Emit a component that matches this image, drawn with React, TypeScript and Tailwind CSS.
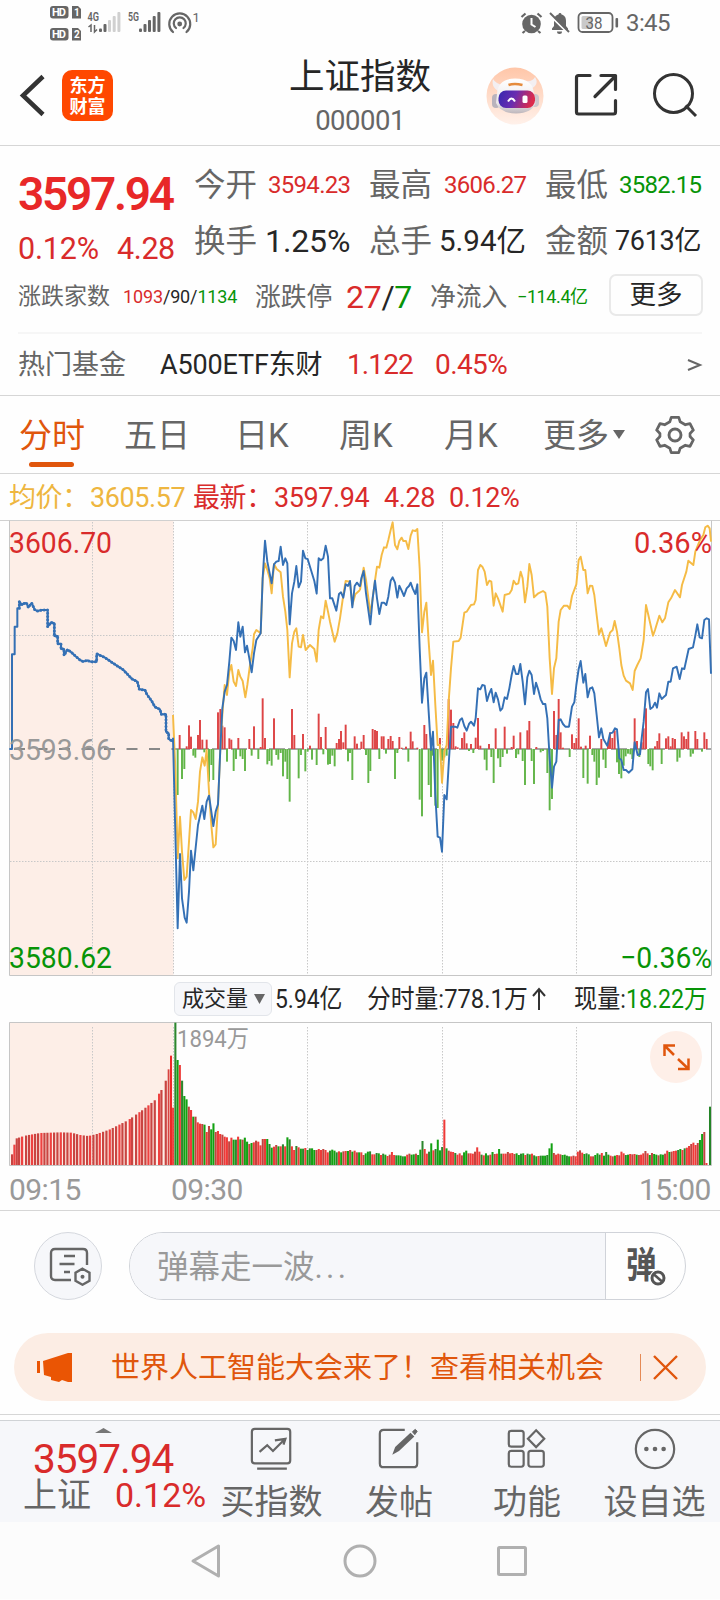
import React from "react";

const RED = "#d92b2b";
const GREEN = "#079407";

const PREOPEN =
  "28,702 36,702 36,418 44,418 44,335 52,335 52,280 58,280 58,260 66,270 74,264 80,265 85,277 95,264 104,284 112,288 125,285 143,285 143,335 153,322 163,325 163,363 173,363 173,386 183,386 183,402 192,402 192,421 202,404 212,410 225,422 240,435 250,440 262,436 272,440 290,440 290,416 315,428 340,445 368,463 380,475 396,492 412,500 418,523 435,525 440,537 455,558 465,576 480,583 484,598 498,598 498,650 506,655 506,672 519,680";
const INDEX_A =
  "519,668 533,1240 540,1017 546,1150 554,1208 560,1223 567,1130 573,1007 580,1066 594,930 600,903 607,872 613,912 620,860 627,842 634,890 640,933 647,890 654,868 661,702 667,580 674,530 681,510 688,440 694,368 701,378 708,405 715,322 721,365 728,335 735,412 741,392 748,430 755,472 762,415 769,375 782,355 788,190 795,77 802,140 808,170 815,205 822,148 829,140 836,138 842,95 849,150 856,130 862,145 869,328 876,235 883,200 889,153 896,217 903,200 909,107 916,130 923,132 930,155 943,198 950,236 956,130 963,136 970,130 977,92 984,125 990,250 997,250 1009,287 1017,237 1023,232 1030,248 1037,208 1044,213 1050,198 1057,277 1064,213 1071,203 1080,215";
const INDEX_B =
  "0,215 4,190 11,168 18,235 31,328 38,250 45,197 51,250 58,297 65,263 72,263 79,270 85,245 92,197 98,187 105,203 112,248 118,212 125,227 132,243 140,220 147,213 152,203 158,220 166,237 172,208 179,400 186,563 193,490 199,473 206,590 213,705 219,650 226,840 233,965 240,968 246,1010 253,840 260,853 266,750 273,635 285,635 292,638 300,615 306,610 313,633 320,647 327,627 333,620 342,632 347,610 354,520 361,523 367,510 374,512 381,558 388,535 394,522 401,562 407,533 414,553 421,587 427,580 434,547 441,552 448,520 455,480 461,453 468,477 475,477 481,447 488,500 495,568 502,487 508,467 515,480 522,537 528,503 535,525 542,553 549,567 556,567 562,610 569,730 576,818 582,755 589,740 596,615 602,613 609,627 616,635 627,635 636,575 643,562 649,510 656,462 662,438 670,503 676,477 683,547 690,520 697,517 703,535 710,600 717,667 724,640 730,672 742,692 750,655 758,653 765,640 771,643 778,730 784,735 791,765 798,765 806,773 817,763 824,682 833,720 840,718 845,670 851,620 858,532 864,522 871,582 878,577 885,563 891,578 898,535 905,552 918,540 925,500 932,500 939,460 950,455 959,492 966,460 973,462 986,402 999,397 1006,362 1012,328 1019,367 1026,370 1033,315 1040,310 1047,313 1053,476";
const AVG_A =
  "519,600 526,760 533,1030 540,905 546,1010 553,1095 560,1085 567,980 573,885 580,892 587,912 594,860 600,770 607,727 614,752 620,705 627,830 634,930 640,997 647,988 654,870 661,700 667,600 674,510 681,540 688,470 694,450 701,500 708,513 715,465 721,485 728,498 736,547 742,510 750,450 758,400 762,358 769,345 782,355 788,190 795,145 802,165 809,190 815,235 822,147 830,162 842,172 849,245 856,290 862,345 869,487 876,385 883,350 889,340 896,395 903,397 909,360 917,405 930,390 943,402 950,440 956,345 963,304 970,310 977,257 984,290 990,320 1004,380 1012,355 1020,310 1030,240 1037,198 1050,200 1057,270 1066,238 1080,225";
const AVG_B =
  "0,225 4,200 11,158 18,195 31,295 38,250 45,197 51,155 58,158 65,120 72,97 79,98 85,75 92,45 98,22 105,90 112,103 118,78 125,68 130,78 138,78 145,102 152,62 158,46 166,48 172,42 179,160 186,352 193,290 199,263 206,380 213,480 219,437 226,570 233,690 240,690 246,803 253,710 260,690 266,560 273,460 280,380 296,378 302,368 313,293 320,290 333,270 342,268 347,255 354,165 361,150 367,155 374,170 381,210 388,197 394,200 401,272 407,235 414,250 428,290 434,240 448,236 455,225 461,197 468,208 475,205 482,170 488,190 495,262 502,215 508,147 515,180 522,247 535,235 549,228 556,233 562,275 569,430 576,537 582,460 589,430 596,320 602,285 612,272 622,272 629,282 636,243 649,208 656,135 662,125 670,165 676,165 683,235 690,212 697,213 703,240 710,300 717,358 724,340 738,393 750,353 758,345 764,318 771,350 778,400 784,450 791,482 798,497 810,505 818,525 824,468 832,450 842,430 851,375 858,270 865,300 879,362 885,345 898,302 907,322 915,310 925,262 933,250 945,225 960,247 966,210 979,170 985,137 1000,150 1006,110 1020,75 1030,60 1036,37 1043,32 1049,40 1053,80";

const MOMENTUM_A =
  "533:-138 539:42 546:-90 553:-60 560:8 567:71 573:37 580:-20 586:-26 594:42 600:87 607:28 613:-10 620:28 627:-98 634:-48 640:-93 654:110 661:120 667:70 674:65 681:-38 688:32 694:28 701:-66 708:-30 715:33 721:-22 728:-30 735:-66 748:30 755:-20 762:68 775:-30 782:6 788:152 795:33 802:-46 808:-36 815:-50 822:92 829:-18 835:-32 842:-12 849:-82 856:-38 862:-90 869:-158 876:120 883:42 896:-88 903:-18 909:45 916:-67 923:-8 930:10 936:-32 950:-48 956:106 963:36 970:-16 977:66 984:-47 990:-45 997:-20 1004:-52 1010:18 1017:30 1023:54 1030:20 1037:73 1044:-37 1050:-12 1057:-93 1064:38 1071:16";
const MOMENTUM_B =
  "4:22 11:42 18:-18 25:-102 31:-66 38:60 45:57 51:54 58:-30 65:38 71:38 78:-14 85:30 92:39 98:24 105:-90 112:-12 118:36 125:4 138:7 145:-38 152:52 158:23 172:4 179:-152 186:-202 193:72 199:45 206:-108 213:-144 219:-20 226:-170 233:-177 240:33 246:-35 253:-25 260:-20 266:150 273:118 280:78 287:8 293:5 306:33 313:50 320:17 327:-6 333:15 340:-12 347:34 354:93 361:10 374:-32 380:-64 387:15 394:-24 401:-102 407:62 414:-28 421:-54 428:-24 434:67 441:-14 455:6 461:40 468:-27 475:-16 481:50 488:-36 495:-108 502:56 508:84 515:-36 522:-105 529:6 542:-10 549:-6 562:-72 569:-184 576:-150 582:114 589:42 596:150 602:50 609:4 629:-24 636:44 643:18 649:33 656:92 663:7 670:-87 677:10 683:-104 690:40 697:-18 703:-38 710:-108 717:-86 724:30 730:-32 737:-57 744:18 750:50 757:33 764:56 771:-40 777:-75 784:-88 791:-50 797:-22 804:-14 811:-16 817:-30 824:92 831:24 838:-24 845:20 851:62 858:122 865:-45 871:-52 878:-64 885:8 892:24 898:47 905:-45 918:32 925:38 932:8 938:33 945:30 952:-38 959:-26 965:50 972:38 979:30 985:52 992:-23 999:-14 1006:54 1012:30 1026:-8 1033:50 1040:30";

const parseMomentum = (s: string, dx: number) =>
  s.split(" ").map((p) => {
    const [x, v] = p.split(":").map(Number);
    return { x: x + dx, v };
  });
const MOMENTUM = [...parseMomentum(MOMENTUM_A, 0), ...parseMomentum(MOMENTUM_B, 1080)];

const AUCTION_SHAPE = [
  [36, 32], [43, 61], [50, 80], [65, 85], [80, 89], [120, 96], [180, 98], [215, 97], [240, 90],
  [265, 87], [290, 93], [330, 107], [385, 135], [430, 167], [465, 195], [484, 225], [498, 255],
];
const auctionHeight = (x: number) => {
  for (let i = 1; i < AUCTION_SHAPE.length; i++) {
    const [x0, h0] = AUCTION_SHAPE[i - 1];
    const [x1, h1] = AUCTION_SHAPE[i];
    if (x <= x1) return h0 + ((h1 - h0) * (x - x0)) / (x1 - x0);
  }
  return 255;
};
const AUCTION_X = [
  36, 43, 50, 57, 66, 78, 87, 96, 105, 114, 124, 133, 142, 152, 162, 172, 182, 192, 202, 212, 222,
  231, 241, 251, 261, 270, 280, 290, 299, 309, 319, 329, 338, 348, 358, 367, 377, 389, 396, 408,
  418, 426, 436, 445, 454, 464, 477, 484, 497,
];

const VOLUME_SESSIONS = [
  {
    from: 523,
    to: 1081,
    bars: "427G 315G 300R 253G 207G 197G 175R 165R 145G 145R 128R 124R 123R 121G 99R 117R 107G 125G 99R 102R 93R 91R 85R 83R 71R 82R 76G 76G 85R 77G 76R 82G 70G 63R 66G 68R 73R 70R 59R 78R 78R 78G 63G 52G 55R 60R 56G 56R 62G 56R 83G 77G 56R 45R 57G 53R 49G 49G 51R 45G 50G 50G 45G 45R 48R 45R 48R 45R 38R 43G 46G 43G 38G 41R 38G 41R 42R 42G 45R 40G 43R 38R 38G",
  },
  {
    from: 1081,
    to: 1330,
    bars: "38R 30R 35G 40G 41G 32R 32R 36G 35G 30R 34G 31G 27R 31R 39R 30R 29G 29G 28G 26G 26G 31R 34R 31G 32G 34R 30G 46G 72G 48R 34R 40G 65G 44R 48G 76G 44G 54G",
  },
  {
    from: 1330,
    to: 1652,
    bars: "136R 50G 43R 40R 39R 36G 31R 35R 29R 38G 43G 35R 35R 34R 40R 53R 40R 31G 29R 35G 29G 31R 39G 33R 34R 48G 34G 34R 34R 39R 35R 36R 33R 35G 30G 34G 35G 30R 34G 32G 34R 29G 26G 27R 28G 28G 28G 30G 50G",
  },
  {
    from: 1652,
    to: 2123,
    bars: "65G 36R 31R 34R 32R 30G 31G 28G 26G 26R 28R 26R 40R 44R 37R 33G 35G 32G 26R 26R 30G 35G 31G 36R 28G 39G 31G 28R 26R 28G 30R 29R 40R 35R 30G 31G 33R 32R 33R 31G 30R 31R 35R 42R 35R 30G 36R 33G 31G 29R 32G 31G 34R 43R 39G 40R 42R 43R 45G 48G 45R 50G 52R 57R 63R 67R 60R 66R 75G 93G 99R 6R",
  },
];
const BARS = VOLUME_SESSIONS.flatMap(({ from, to, bars }) => {
  const list = bars.split(" ");
  const step = (to - from) / list.length;
  return list.map((s, i) => ({ x: from + i * step, w: step - 0.5, h: parseInt(s, 10), red: s.endsWith("R") }));
});

function Logo() {
  return (
    <div className="flex h-[51px] w-[51px] flex-col items-center justify-center rounded-[10px] bg-[#ff4800] text-[18px] font-bold leading-[21px] text-white">
      <span>东方</span>
      <span>财富</span>
    </div>
  );
}

function StatusBar() {
  return (
    <div className="flex h-[46px] items-start text-[#666]">
      <svg className="ml-[49px] mt-[4px] shrink-0" width="152" height="38" viewBox="49 4 152 38" fontFamily="Roboto" fill="#666">
        {[6, 28].map((y, i) => (
          <g key={y}>
            <rect x="50" y={y} width="18.5" height="12.5" rx="3" />
            <path d={`M72 ${y}h6l3 3v9.500h-9z`} />
            <text x="52" y={y + 10.2} fontSize="11" fontWeight="700" fill="#fff" textLength="14">HD</text>
            <text x="74" y={y + 10} fontSize="10" fontWeight="700" fill="#fff">{i + 1}</text>
          </g>
        ))}
        <text x="87.5" y="21" fontSize="12.5" fontWeight="600" textLength="11.5" lengthAdjust="spacingAndGlyphs">4G</text>
        <text x="128" y="21" fontSize="12.5" fontWeight="600" textLength="11" lengthAdjust="spacingAndGlyphs">5G</text>
        <path d="M88.500 27l2.500-2v7M94.500 25v7l2.500-2.500" stroke="#666" strokeWidth="1.5" fill="none" />
        <rect x="99" y="28.5" width="3" height="3.5" rx="1" />
        <rect x="103.5" y="24" width="3" height="8" rx="1" />
        <g fill="#d0d0d0">
          <rect x="108" y="20" width="3" height="12" rx="1" />
          <rect x="112.7" y="16" width="3" height="16" rx="1" />
          <rect x="117.4" y="12" width="3" height="20" rx="1" />
        </g>
        <rect x="139" y="28.5" width="3" height="3.5" rx="1" />
        <rect x="143.5" y="24" width="3" height="8" rx="1" />
        <rect x="148" y="20" width="3" height="12" rx="1" />
        <rect x="152.7" y="16" width="3" height="16" rx="1" />
        <rect x="157.4" y="12" width="3" height="20" rx="1" />
        <g fill="none" stroke="#666" strokeWidth="2.2" strokeLinecap="round">
          <path d="M173 32a10.500 10.500 0 1 1 13.500 0M176 28a6 6 0 1 1 7.500 0" />
        </g>
        <circle cx="179.7" cy="24" r="2.4" />
        <text x="192.5" y="22" fontSize="13">1</text>
      </svg>
      <svg className="ml-[319px] mt-[11px] shrink-0" width="100" height="24" viewBox="520 11 100 24" fill="#666">
        <circle cx="531.5" cy="24" r="9.3" />
        <path d="M531.500 18v6.500l4 2.500" stroke="#fff" strokeWidth="2" fill="none" />
        <path d="M521.500 17l4-3.500M541.500 17l-4-3.500M525 31l-2.500 2M538 31l2.500 2" stroke="#666" strokeWidth="2.2" />
        <path d="M552 30h16v-1.500l-2-2.500v-5c0-4-2-6-4.500-6.500 0-2-3-2-3 0-2.500.5-4.500 2.500-4.500 6.500v5l-2 2.500zM557 31.500h5a2.500 2.500 0 0 1-5 0z" />
        <path d="M549 14.500l19 18.500" stroke="#fff" strokeWidth="2" />
        <path d="M550 13l19 19" stroke="#666" strokeWidth="1.9" />
        <rect x="578.5" y="13" width="34" height="19" rx="4" fill="none" stroke="#666" strokeWidth="1.8" />
        <rect x="581.5" y="16" width="11" height="13" rx="1.5" fill="#c9c9c9" />
        <rect x="615.5" y="18" width="2.6" height="9.5" rx="1" />
        <text x="585.5" y="28.5" fontFamily="Roboto" fontSize="16.5" textLength="17" lengthAdjust="spacingAndGlyphs">38</text>
      </svg>
      <span className="ml-[6px] mt-[11px] text-[24px] leading-[24px] tracking-[-0.6px]">3:45</span>
    </div>
  );
}

function Header() {
  return (
    <header className="flex h-[100px] items-start border-b border-[#d6d6d6]">
      <svg className="ml-[18px] mt-[27px] shrink-0" width="30" height="44" viewBox="0 0 30 44" fill="none" stroke="#333" strokeWidth="4.5">
        <path d="M25 3.500L5 22.500l20 19" />
      </svg>
      <div className="ml-[14px] mt-[24px]">
        <Logo />
      </div>
      <div className="ml-[147px] flex w-[200px] flex-col items-center pt-[12px]">
        <h1 className="text-[35.5px] leading-[38px] text-[#262626]">上证指数</h1>
        <span className="mt-[11px] text-[27.5px] leading-[27px] tracking-[-0.5px] text-[#666]">000001</span>
      </div>
      <svg className="ml-[25px] mt-[20px] shrink-0" width="60" height="60" viewBox="-1 -1 60 60">
        <defs>
          <linearGradient id="halo" x1="0" y1="0" x2="0" y2="1">
            <stop offset="0" stopColor="#ffc6a8" />
            <stop offset="1" stopColor="#fff1ea" />
          </linearGradient>
          <linearGradient id="visor" x1="0" y1="0" x2="1" y2=".2">
            <stop offset="0" stopColor="#3528b0" />
            <stop offset=".5" stopColor="#6a2cb0" />
            <stop offset="1" stopColor="#dc2b4c" />
          </linearGradient>
          <linearGradient id="shell" x1="0" y1="0" x2="0" y2="1">
            <stop offset="0" stopColor="#fff" />
            <stop offset=".7" stopColor="#ece8ea" />
            <stop offset="1" stopColor="#bdb6bb" />
          </linearGradient>
        </defs>
        <circle cx="29" cy="29" r="28.5" fill="url(#halo)" />
        <path d="M12 24Q5 20 7 12Q10 17 17 18zM44 22Q54 18 49 10Q47 15 39 14z" fill="#f3eff2" />
        <rect x="6" y="27" width="8" height="14" rx="4" fill="#b9b3bc" />
        <rect x="45" y="27" width="8" height="13" rx="4" fill="#cdc6cc" />
        <path d="M11 27Q12 11.500 29 11.500Q47 11.500 48 27L49.500 36Q46 46 30 46.500Q14 46 10 36z" fill="url(#shell)" />
        <rect x="12.5" y="23.5" width="36.5" height="17.5" rx="7.5" fill="url(#visor)" />
        <path d="M22 34.500q3.500-6 7 0" stroke="#fff" strokeWidth="2" fill="none" />
        <rect x="36.5" y="28.500" width="5" height="7.500" rx="1.5" fill="#fff" />
        <path d="M22.500 18q6-2 14 0" stroke="#e58b3c" strokeWidth="2.6" fill="none" />
      </svg>
      <svg className="ml-[29px] mt-[26px] shrink-0" width="46" height="48" viewBox="0 0 46 48" fill="none" stroke="#333" strokeWidth="3.2" strokeLinejoin="round" strokeLinecap="round">
        <path d="M16 3.500H4.500Q2.500 3.500 2.500 5.500v34.500q0 2 2 2h35q2 0 2-2V28.500" />
        <path d="M27 3.500h14.500v14M41 4.500L21 24.500" />
      </svg>
      <svg className="ml-[32px] mt-[25px] shrink-0" width="48" height="48" viewBox="0 0 48 48" fill="none" stroke="#333" strokeWidth="3">
        <circle cx="21.5" cy="22.5" r="19" />
        <path d="M33.500 34.500l10.500 10.500" />
      </svg>
    </header>
  );
}

function Quote() {
  return (
    <section className="h-[250px] whitespace-nowrap border-b border-[#d6d6d6] pt-[14px] text-[#666]">
      <div className="flex h-[111px]">
        <div className="w-[176px] pl-[18px] text-[#d92b2b]">
          <div className="mt-[11px] text-[46px] font-semibold leading-[46px] tracking-[-2.3px] text-[#e82828]">3597.94</div>
          <div className="mt-[17px] flex text-[30.5px] leading-[30px]">
            <span className="w-[99px] tracking-[-0.2px]">0.12%</span>
            <span className="tracking-[-0.4px]">4.28</span>
          </div>
        </div>
        <div className="flex flex-1 flex-col text-[31.5px] leading-[32px]">
          <div className="flex h-[50px] items-center">
            <span className="ml-[18px] w-[74px] pt-px">今开</span>
            <span className="w-[101px] text-[24px] tracking-[-0.7px] text-[#d92b2b]">3594.23</span>
            <span className="w-[75px] pt-px">最高</span>
            <span className="w-[101px] text-[24px] tracking-[-0.7px] text-[#d92b2b]">3606.27</span>
            <span className="w-[74px] pt-px">最低</span>
            <span className="text-[24px] tracking-[-0.7px] text-[#079407]">3582.15</span>
          </div>
          <div className="mt-[6px] flex h-[50px] items-center">
            <span className="ml-[18px] w-[71px] pt-px">换手</span>
            <span className="w-[104px] text-[32px] tracking-[-0.1px] text-[#262626]">1.25%</span>
            <span className="w-[70px] pt-px">总手</span>
            <span className="w-[106px] text-[29.5px] text-[#262626]">5.94亿</span>
            <span className="w-[70px] pt-px">金额</span>
            <span className="text-[27px] tracking-[-0.3px] text-[#262626]">7613亿</span>
          </div>
        </div>
      </div>
      <div className="flex h-[50px] items-center pl-[18px] pt-[2px] leading-[32px]">
        <span className="w-[105px] text-[23px]">涨跌家数</span>
        <span className="w-[132px] text-[18px] tracking-[-0.15px] text-[#262626]">
          <span className="text-[#d92b2b]">1093</span>/90/<span className="text-[#079407]">1134</span>
        </span>
        <span className="w-[91px] text-[25.8px]">涨跌停</span>
        <span className="w-[84px] text-[32px] tracking-[-0.3px] text-[#262626]">
          <span className="text-[#d92b2b]">27</span>/<span className="text-[#079407]">7</span>
        </span>
        <span className="w-[87px] text-[25.8px]">净流入</span>
        <span className="w-[92px] text-[18px] tracking-[-0.4px] text-[#079407]">−114.4亿</span>
        <button className="-mt-[4px] h-[42px] w-[94px] rounded-[7px] border-2 border-[#e9e9e9] text-[26.5px] leading-[38px] text-[#262626]">更多</button>
      </div>
      <div className="mx-[18px] mt-[11px] border-t-2 border-[#f6f6f6]" />
      <div className="flex h-[61px] items-center pl-[18px] pt-px text-[27px] leading-[32px]">
        <span className="w-[142px]">热门基金</span>
        <span className="w-[187px] text-[27px] tracking-[-0.15px] text-[#262626]">A500ETF东财</span>
        <span className="w-[88px] text-[28px] tracking-[-0.9px] text-[#d92b2b]">1.122</span>
        <span className="w-[251px] text-[28px] tracking-[-0.6px] text-[#d92b2b]">0.45%</span>
        <svg width="18" height="16" viewBox="0 0 18 16" fill="none" stroke="#666" strokeWidth="2">
          <path d="M2 3l12 5-12 5" />
        </svg>
      </div>
    </section>
  );
}

function Tabs() {
  return (
    <nav className="flex h-[78px] items-center whitespace-nowrap border-b border-[#d6d6d6] pl-[19px] text-[33px] leading-[80px] text-[#666]">
      <div className="relative w-[105px] pt-[3px] text-[#e0560c]">
        分时
        <div className="absolute bottom-[9px] left-[10px] h-[5px] w-[45px] rounded-full bg-[#e0560c]" />
      </div>
      <span className="w-[111px] pt-[3px]">五日</span>
      <span className="w-[104px] pt-[3px]">日K</span>
      <span className="w-[105px] pt-[3px]">周K</span>
      <span className="w-[99px] pt-[3px]">月K</span>
      <span className="w-[70px] pt-[3px]">更多</span>
      <svg width="12" height="9" viewBox="0 0 12 9"><path d="M0 0h12L6 9z" fill="#666" /></svg>
      <svg className="ml-[30px]" width="40" height="40" viewBox="-20 -20 40 40" fill="none" stroke="#666" strokeWidth="2.9" strokeLinejoin="round">
        <path d="M-4-18h8l1.500 4.500 5.500 3 5-1 3.500 6.500-3.500 3.500v3l3.500 3.500-3.500 6.500-5-1-5.500 3-1.500 4.500h-8l-1.500-4.500-5.500-3-5 1-3.500-6.500 3.500-3.500v-3l-3.500-3.500 3.500-6.500 5 1 5.500-3z" transform="scale(.94 .98)" />
        <circle r="6" />
      </svg>
    </nav>
  );
}

function Averages() {
  return (
    <div className="flex h-[46px] items-center whitespace-nowrap pl-[9px] pt-[2px] text-[27px] leading-[40px] tracking-[-0.4px] text-[#d92b2b]">
      <span className="w-[81px] text-[#eeb640]">均价：</span>
      <span className="w-[103px] text-[#eeb640]">3605.57</span>
      <span className="w-[81px]">最新：</span>
      <span className="w-[110px]">3597.94</span>
      <span className="w-[65px]">4.28</span>
      <span>0.12%</span>
    </div>
  );
}

const GRID_X = [92.5, 307.5, 442.5, 576.5];

function PriceChart() {
  return (
    <svg className="block" width="720" height="457" viewBox="0 520 720 457" fontFamily="Roboto" fontSize="30">
      <rect x="9" y="521" width="164.5" height="454" fill="#fdeee7" />
      <path d="M0 520.500H720" stroke="#d0d0d0" />
      <path d="M9.500 520.500V975.500H711.500V520.500" stroke="#c6c6c6" fill="none" />
      <g stroke="#c8c8c8" strokeDasharray="1.5 1.5">
        {[...GRID_X, 173.5].map((x) => <path key={x} d={`M${x} 522V975`} />)}
        <path d="M10 635.500H711M10 861.500H711" />
      </g>
      <path d="M14 749H174" stroke="#888" strokeWidth="1.8" strokeDasharray="11 11.5" />
      <path d="M174 749H711" stroke="#888" strokeWidth="1.6" strokeDasharray="16 3" />
      <g fill="none" strokeWidth="5.8" strokeLinejoin="round" transform="translate(0 515) scale(.33333)">
        {MOMENTUM.map((b) => (
          <rect key={b.x} x={b.x - 2.9} y={b.v > 0 ? 702 - b.v : 702} width="5.8" height={Math.abs(b.v)} fill={b.v > 0 ? "#dd4445" : "#62b548"} />
        ))}
        <g stroke="#f5bb45">
          <polyline points={AVG_A} />
          <polyline points={AVG_B} transform="translate(1080 0)" />
        </g>
        <g stroke="#3470b5">
          <polyline points={PREOPEN} strokeWidth="6" />
          <polyline points={PREOPEN.slice(PREOPEN.indexOf("58,280"))} strokeWidth="9" strokeLinecap="round" strokeDasharray="0 10" />
          <polyline points={INDEX_A} />
          <polyline points={INDEX_B} transform="translate(1080 0)" />
        </g>
      </g>
      <text x="9" y="552.5" fill={RED} textLength="103" lengthAdjust="spacingAndGlyphs">3606.70</text>
      <text x="9" y="759.5" fill="#999" textLength="103" lengthAdjust="spacingAndGlyphs">3593.66</text>
      <text x="9" y="967.5" fill={GREEN} textLength="103" lengthAdjust="spacingAndGlyphs">3580.62</text>
      <text x="634" y="552.5" fill={RED} textLength="78" lengthAdjust="spacingAndGlyphs">0.36%</text>
      <text x="620" y="967.5" fill={GREEN} textLength="92" lengthAdjust="spacingAndGlyphs">−0.36%</text>
    </svg>
  );
}

function VolumeInfo() {
  return (
    <div className="flex h-[43px] items-center whitespace-nowrap pl-[174px] text-[26px] leading-[34px] text-[#262626]">
      <div className="flex h-[34px] w-[98px] shrink-0 items-center rounded-[6px] border border-[#e2e5ea] bg-[#f6f7fa] pl-[7px]">
        <span className="w-[72px] text-[22px]">成交量</span>
        <svg width="11" height="10" viewBox="0 0 11 10"><path d="M0 0h11L5.500 10z" fill="#666" /></svg>
      </div>
      <span className="w-[95px] shrink-0 pl-[3px] pt-px"><span className="inline-block origin-left scale-x-[0.88]">5.94亿</span></span>
      <span className="w-[164px] shrink-0 pt-px"><span className="inline-block origin-left scale-x-[0.915]">分时量:778.1万</span></span>
      <svg className="mr-[27px] shrink-0" width="16" height="24" viewBox="0 0 16 24" fill="none" stroke="#333" strokeWidth="2">
        <path d="M8 23V2M2 9l6-7 6 7" />
      </svg>
      <span className="w-[134px] shrink-0 pt-px"><span className="inline-block origin-left scale-x-[0.89]">现量:<span className="text-[#079407]">18.22万</span></span></span>
    </div>
  );
}

function VolumeChart() {
  return (
    <svg className="block" width="720" height="146" viewBox="0 1020 720 146">
      <rect x="9" y="1022" width="164.5" height="143" fill="#fdeee7" />
      <path d="M9.500 1165.500V1022.500H711.500V1165.500z" stroke="#c6c6c6" fill="none" />
      <g stroke="#c8c8c8" strokeDasharray="1.5 1.5">
        {[...GRID_X, 173.5].map((x) => <path key={x} d={`M${x} 1027V1165`} />)}
      </g>
      <g transform="translate(0 970) scale(.33333)">
        {AUCTION_X.map((x, i) => (
          <rect key={x} x={x - 3} y={585 - auctionHeight(x)} width="6.6" height={auctionHeight(x)} fill={i % 3 === 1 ? "#ee4140" : "#c94441"} />
        ))}
        <rect x="503" y="298" width="5.5" height="287" fill="#d74441" />
        <rect x="510" y="257" width="6" height="328" fill="#ee2827" />
        <rect x="516.5" y="413" width="5" height="172" fill="#ee2827" />
        {BARS.map((b, i) => (
          <rect key={i} x={b.x} y={585 - b.h} width={b.w} height={b.h} fill={b.red ? (i % 3 ? "#ee3a38" : "#bf4540") : i % 3 ? "#12a112" : "#2d862d"} />
        ))}
        <rect x="2127" y="410" width="6" height="175" fill="#238426" />
      </g>
      <text x="177" y="1047" fontFamily="Roboto, 'Noto Sans CJK SC', sans-serif" fontSize="23.5" fill="#999" textLength="72" lengthAdjust="spacingAndGlyphs">1894万</text>
      <circle cx="676" cy="1057" r="26" fill="#feefe8" />
      <path d="M664.500 1056v-10.500h10.500M665 1046l9 9M678 1069h10.500v-10.500M688 1068.500l-10-9.500" fill="none" stroke="#e0560c" strokeWidth="2.5" />
    </svg>
  );
}

function TimeAxis() {
  return (
    <div className="flex h-[45px] items-start border-b border-[#d6d6d6] pl-[9px] pt-[9px] text-[30px] leading-[30px] tracking-[-0.6px] text-[#999]">
      <span className="w-[162px]">09:15</span>
      <span className="w-[468px]">09:30</span>
      <span>15:00</span>
    </div>
  );
}

function CommentBar() {
  return (
    <div className="flex h-[122px] items-start pl-[34px] pt-[21px]">
      <div className="flex h-[68px] w-[68px] items-center justify-center rounded-full border border-[#d5d8de] bg-[#f6f7fa]">
        <svg className="ml-[3px]" width="44" height="40" viewBox="0 0 44 40" fill="none" stroke="#666" strokeWidth="2.4">
          <path d="M23 34H7q-4 0-4-4V7q0-4 4-4h28q4 0 4 4v12M16 10h11M11.500 18h15M16 26h6" />
          <path d="M34.500 23.500l7 4v8l-7 4-7-4v-8z" transform="translate(0,-.8)" />
          <circle cx="34.5" cy="30.8" r="2" fill="#666" stroke="none" />
        </svg>
      </div>
      <div className="ml-[27px] flex h-[68px] w-[557px] overflow-hidden rounded-full border border-[#d0d3d9]">
        <div className="w-[476px] border-r border-[#d0d3d9] bg-[#f6f7fa] pl-[27px] text-[31.5px] leading-[70px] text-[#999]">
          弹幕走一波<span className="tracking-[3.3px]">...</span>
        </div>
        <div className="relative flex-1 pl-[20px] text-[36px] font-bold leading-[67px] text-[#555]">
          <span className="inline-block origin-left scale-x-[0.85]">弹</span>
          <svg className="absolute left-[43px] top-[36px]" width="18" height="18" viewBox="0 0 18 18" fill="none">
            <circle cx="9" cy="9" r="6.5" fill="#fff" stroke="#fff" strokeWidth="4" />
            <circle cx="9" cy="9" r="6" stroke="#555" strokeWidth="3" />
            <path d="M5 5.500l8 7" stroke="#555" strokeWidth="2.5" />
          </svg>
        </div>
      </div>
    </div>
  );
}

function Banner() {
  return (
    <div className="mx-[14px] flex h-[68px] items-center whitespace-nowrap rounded-full bg-[#fcede4] pl-[23px] text-[#e0560c]">
      <svg width="36" height="32" viewBox="0 0 36 32" fill="#ea5504">
        <path d="M0 10h3v12H0zM6 10L31 2h4v29h-4l-6-2-3 2-8-2v-3l-7-2z" />
      </svg>
      <span className="ml-[38px] w-[529px] pt-[2px] text-[29px] leading-[66px]">世界人工智能大会来了！查看相关机会</span>
      <div className="h-[27px] w-px bg-[#e58a55]" />
      <svg className="ml-[11px]" width="27" height="27" viewBox="0 0 27 27" stroke="#e0560c" strokeWidth="2.4">
        <path d="M2 2l23 23M25 2L2 25" />
      </svg>
    </div>
  );
}

function BottomBar() {
  const icons = [
    <path key="a" d="M5 3h34q3 0 3 3v30q0 3-3 3H5q-3 0-3-3V6q0-3 3-3zM7.500 44.500h31M10 27l8-7 6 6 12-12M26 15l11-1.500-2 6" />,
    <g key="b">
      <path d="M29 4H7Q3 4 3 8v31q0 4 4 4h31q4 0 4-4V17" />
      <path d="M16 30l3-8L35 7l4 4-16 15z" fill="#666" stroke="none" />
      <path d="M37 6l3-2.500 2 2L39.500 9z" fill="#666" strokeWidth="1" />
    </g>,
    <g key="c">
      <rect x="4" y="5" width="15.5" height="16.5" rx="2.5" />
      <rect x="4" y="26" width="15.5" height="16.5" rx="2.5" />
      <rect x="24.5" y="26" width="16" height="16.5" rx="2.5" />
      <path d="M32.500 4.500l8.500 8.700-8.500 8.800-8.500-8.800z" />
    </g>,
    <g key="d">
      <circle cx="23" cy="24" r="20" />
      <g fill="#666" stroke="none"><circle cx="14" cy="24" r="2.4" /><circle cx="23" cy="24" r="2.4" /><circle cx="32" cy="24" r="2.4" /></g>
    </g>,
  ];
  const labels = ["买指数", "发帖", "功能", "设自选"];
  const widths = ["w-[104px]", "w-[151px]", "w-[105px]", "w-[150px]"];
  return (
    <footer className="flex h-[102px] whitespace-nowrap border-t border-[#d0d3d6] bg-[#f6f7fa] text-[#666]">
      <div className="w-[219px] shrink-0">
        <svg className="ml-[95px] mt-[7px]" width="17" height="5" viewBox="0 0 17 5"><path d="M0 5l8.500-5L17 5z" fill="#777" /></svg>
        <div className="mt-[9px] pl-[33px] text-[40.5px] leading-[34px] tracking-[-1px] text-[#d92b2b]">3597.94</div>
        <div className="mt-[2px] flex items-center pl-[23px] text-[34px] leading-[34px]">
          <span className="w-[92px]">上证</span>
          <span className="text-[34px] text-[#d92b2b]">0.12%</span>
        </div>
      </div>
      {labels.map((label, i) => (
        <div key={label} className={`flex shrink-0 flex-col items-center pl-px pt-[5px] ${widths[i]}`}>
          <svg width="46" height="48" viewBox="0 0 46 48" fill="none" stroke="#666" strokeWidth="2.3">{icons[i]}</svg>
          <span className="mt-[10px] text-[34px] leading-[40px]">{label}</span>
        </div>
      ))}
    </footer>
  );
}

function SystemNav() {
  return (
    <div className="flex h-[77px] items-start bg-[#fcfcfc] pt-[20px]">
      <svg className="ml-[190px]" width="340" height="38" viewBox="190 1542 340 38" fill="none" stroke="#b0b0b0" strokeWidth="3" strokeLinejoin="round">
        <path d="M218.500 1546v30L193 1561z" />
        <circle cx="360" cy="1561" r="15" />
        <rect x="498.5" y="1547.5" width="27" height="27" rx="1" />
      </svg>
    </div>
  );
}

export default function App() {
  return (
    <div className="h-[1600px] w-[720px] overflow-hidden bg-[#fefefe] font-[Roboto,'Noto_Sans_CJK_SC',sans-serif]">
      <StatusBar />
      <Header />
      <Quote />
      <Tabs />
      <Averages />
      <PriceChart />
      <VolumeInfo />
      <VolumeChart />
      <TimeAxis />
      <CommentBar />
      <Banner />
      <div className="mt-[13px] h-[6px] border-t border-[#d6d6d6]" />
      <BottomBar />
      <SystemNav />
    </div>
  );
}
